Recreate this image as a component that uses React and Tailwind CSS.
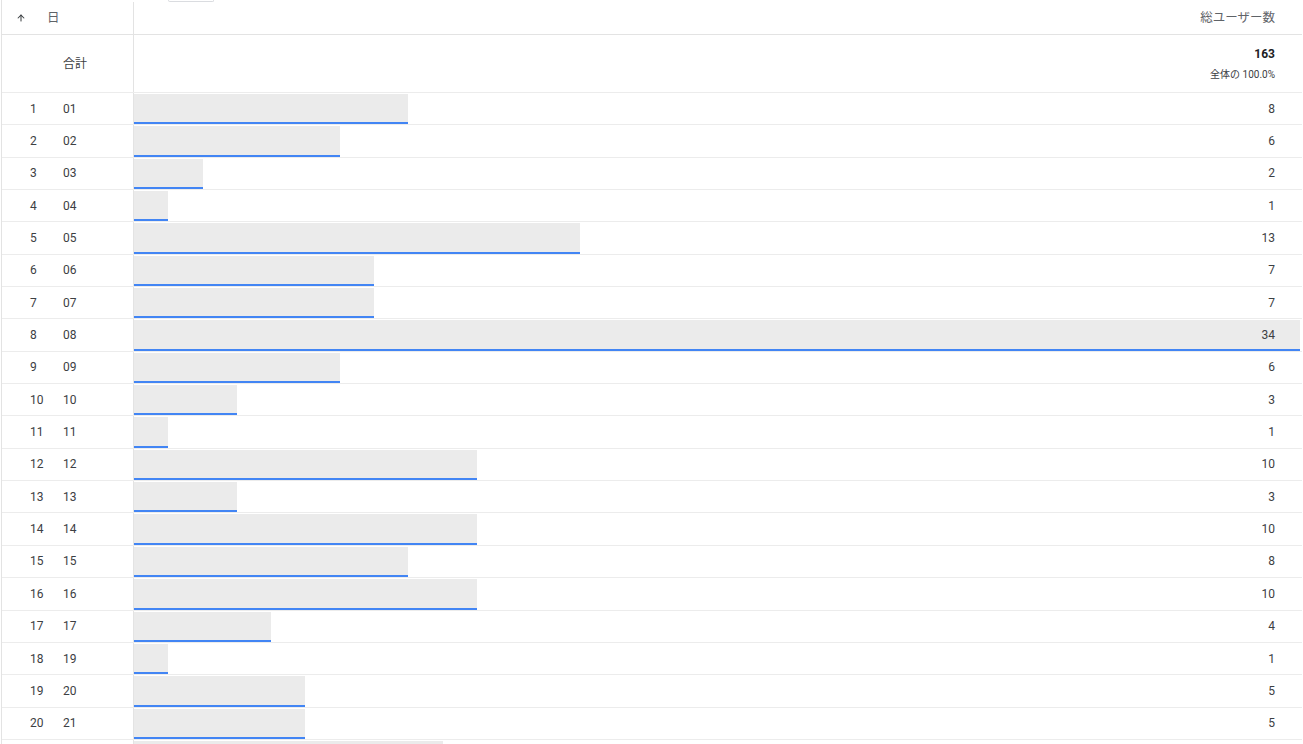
import { ArrowUp } from 'lucide-react'

const ROWS = [
  ['1', '01', 8], ['2', '02', 6], ['3', '03', 2], ['4', '04', 1], ['5', '05', 13],
  ['6', '06', 7], ['7', '07', 7], ['8', '08', 34], ['9', '09', 6], ['10', '10', 3],
  ['11', '11', 1], ['12', '12', 10], ['13', '13', 3], ['14', '14', 10], ['15', '15', 8],
  ['16', '16', 10], ['17', '17', 4], ['18', '19', 1], ['19', '20', 5], ['20', '21', 5],
]
const MAX = 34

function Bar({ value }) {
  return (
    <div className="[grid-area:1/1] flex pr-[2px]">
      <div className="flex flex-col mt-[1px]" style={{ width: `${(value / MAX) * 100}%` }}>
        <div className="flex-1 bg-[#ebebeb]" />
        <div className="h-[2px] bg-[#4285f4]" />
      </div>
    </div>
  )
}

function Row({ idx, day, value }) {
  return (
    <div className="flex h-[32.35px] shrink-0 border-b border-[#ececec]">
      <div className="w-[132px] shrink-0 flex items-center border-r border-[#e3e3e3] text-[12px] text-[#3c4043]">
        <span className="w-[61px] pl-[28px]">{idx}</span>
        <span>{day}</span>
      </div>
      <div className="flex-1 grid">
        <Bar value={value} />
        <div className="[grid-area:1/1] flex items-center justify-end pr-[27px] text-[12px] text-[#3c4043]">
          {value}
        </div>
      </div>
    </div>
  )
}

export default function App() {
  return (
    <div className="w-[1303px] h-[744px] overflow-hidden bg-white font-['Roboto','Noto_Sans_CJK_JP',sans-serif]">
      <div className="ml-[1px] w-[1301px] border-l border-[#e3e3e3] flex flex-col">
        <div className="flex h-[35px] border-b border-[#e3e3e3]">
          <div className="w-[132px] shrink-0 flex items-center border-r border-[#e3e3e3] mt-[2px] text-[12.5px] text-[#5f6368]">
            <span className="w-[45px] pl-[14px] flex items-center">
              <ArrowUp size={10} strokeWidth={2.5} className="text-[#3c4043]" />
            </span>
            <span>日</span>
          </div>
          <div className="flex-1 flex flex-col">
            <div className="ml-[34px] w-[46px] h-[2px] border-b border-x border-[#dadce0] rounded-b-[2px]" />
            <div className="flex-1 flex items-center justify-end pr-[27px] text-[12.5px] text-[#5f6368]">
              総ユーザー数
            </div>
          </div>
        </div>
        <div className="flex h-[58px] border-b border-[#ececec]">
          <div className="w-[132px] shrink-0 flex items-center border-r border-[#e3e3e3] text-[12px] text-[#3c4043]">
            <span className="pl-[61px]">合計</span>
          </div>
          <div className="flex-1 flex flex-col items-end justify-center pr-[27px] gap-[4px]">
            <span className="text-[12px] font-bold text-[#202124]">163</span>
            <span className="text-[10px] text-[#3c4043]">全体の 100.0%</span>
          </div>
        </div>
        {ROWS.map(([idx, day, value]) => (
          <Row key={idx} idx={idx} day={day} value={value} />
        ))}
        <div className="flex h-[32.35px] shrink-0">
          <div className="w-[132px] shrink-0 border-r border-[#e3e3e3]" />
          <div className="flex-1 grid">
            <Bar value={9} />
          </div>
        </div>
      </div>
    </div>
  )
}
